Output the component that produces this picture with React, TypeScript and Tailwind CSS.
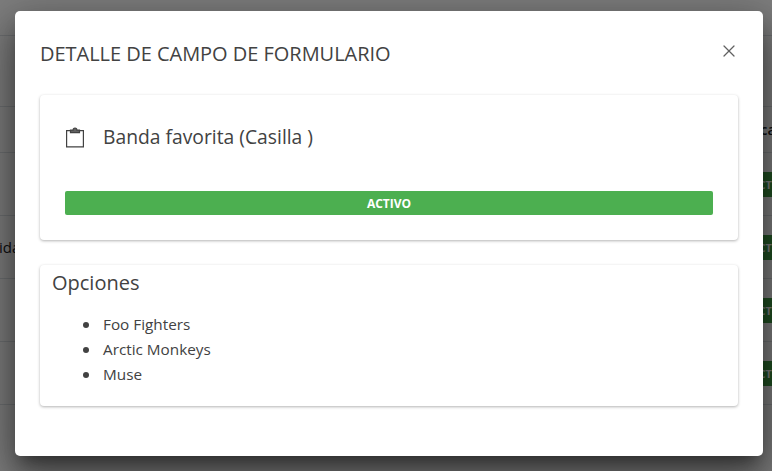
import { X } from "lucide-react";

const ROW_LABELS = ["", "ida", "", ""];

const OPTIONS = ["Foo Fighters", "Arctic Monkeys", "Muse"];

// Page behind the modal: only a sliver of the table shows on each side.
function BackgroundTable() {
  return (
    <div className="bg-white text-[15px] text-[#212529]">
      <div className="h-[36px] border-b border-[#dee2e6]" />
      <div className="h-[71px] border-b border-[#dee2e6]" />
      <div className="flex h-[46px] items-center justify-end border-b border-[#dee2e6]">
        <span className="mr-[-8px] w-[20px] font-semibold">ca</span>
      </div>
      {ROW_LABELS.map((label, i) => (
        <div key={i} className="flex h-[63px] items-center justify-between border-b border-[#dee2e6]">
          <span className="ml-[-1px]">{label}</span>
          <span className="mr-[-28px] w-[60px] bg-[#43a047] pl-[11px] text-[11px] leading-[25px] font-bold text-white">
            ACTIVO
          </span>
        </div>
      ))}
    </div>
  );
}

function ClipboardIcon() {
  return (
    <svg width="24" height="24" viewBox="0 0 24 24" fill="none" stroke="#424242" strokeWidth="1.2">
      <path d="M5.5 5.6H1.6v16.2h16.8V5.6h-3.9" />
      <path d="M5.5 7.6V5.1h2.6a1.9 1.9 0 0 1 3.8 0h2.6v2.5z" fill="#616161" />
    </svg>
  );
}

export default function App() {
  return (
    <div className="relative h-[471px] w-[772px] overflow-hidden font-['Open_Sans','Noto_Sans',sans-serif]">
      <BackgroundTable />
      <div className="absolute inset-0 bg-black/50">
        <div className="mt-[11px] ml-[15px] h-[445px] w-[748px] rounded-[5px] bg-white px-[25px] text-[#424242] shadow-[0_11px_15px_-7px_rgba(0,0,0,0.4),0_24px_38px_3px_rgba(0,0,0,0.3),0_9px_46px_8px_rgba(0,0,0,0.25)]">
          <div className="flex h-[84px] items-start justify-between">
            <h2 className="mt-[29px] text-[20px] leading-[28px] font-normal tracking-[-0.03px]">
              DETALLE DE CAMPO DE FORMULARIO
            </h2>
            <button className="mt-[30px] mr-[-1px] text-[#616161]">
              <X size={20} strokeWidth={1.5} />
            </button>
          </div>

          <section className="h-[145px] rounded-[4px] bg-white px-[25px] shadow-[0_1px_3px_rgba(0,0,0,0.3)]">
            <div className="flex h-[84px] items-center gap-[14px]">
              <ClipboardIcon />
              <span className="text-[19.3px] leading-[28px]">Banda favorita (Casilla )</span>
            </div>
            <div className="mt-[12px] h-[24px] rounded-[2px] bg-[#4caf50] text-center text-[12px] leading-[25px] font-bold text-white">
              ACTIVO
            </div>
          </section>

          <section className="mt-[25px] h-[141px] rounded-[4px] bg-white px-[12px] shadow-[0_1px_3px_rgba(0,0,0,0.3)]">
            <h3 className="pt-[4px] text-[20px] leading-[28px] font-normal">Opciones</h3>
            <ul className="mt-[15px] pl-[31px] text-[15.3px] leading-[25px]">
              {OPTIONS.map((option) => (
                <li key={option} className="flex items-center gap-[14px]">
                  <span className="h-[6px] w-[6px] rounded-full bg-[#424242]" />
                  {option}
                </li>
              ))}
            </ul>
          </section>
        </div>
      </div>
    </div>
  );
}
